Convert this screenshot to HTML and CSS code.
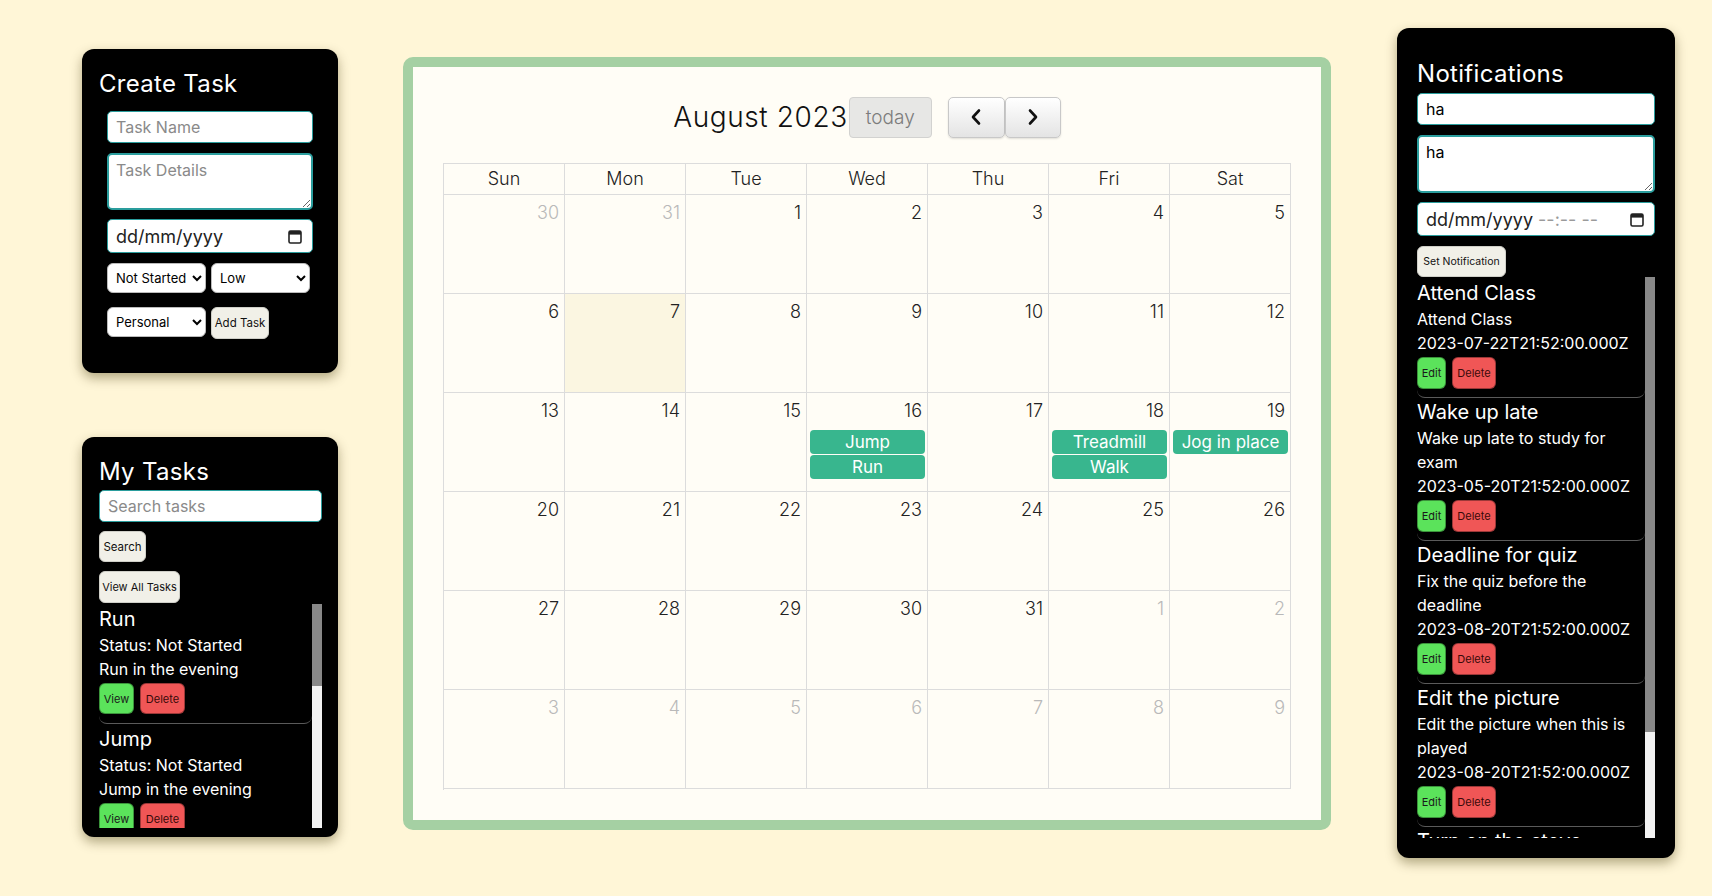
FILE: index.html
```html
<!DOCTYPE html>
<html lang="en">
<head>
<meta charset="utf-8">
<title>Task Calendar</title>
<link rel="stylesheet" href="styles.css">
</head>
<body>
<div class="app">
  <div class="left-col">
    <section class="panel create">
      <h2>Create Task</h2>
      <form class="create-form">
        <input class="field" type="text" placeholder="Task Name">
        <textarea class="field area" placeholder="Task Details"></textarea>
        <div class="field date"><span>dd/mm/yyyy</span><svg class="cal-ico" width="14" height="15" viewBox="0 0 14 15"><rect x="1" y="2" width="12" height="12" rx="1.5" fill="none" stroke="#222" stroke-width="1.6"/><rect x="1" y="2" width="12" height="3.6" fill="#222"/></svg></div>
        <div class="row">
          <select class="sel"><option>Not Started</option></select>
          <select class="sel"><option>Low</option></select>
        </div>
        <div class="row row2">
          <select class="sel"><option>Personal</option></select>
          <button class="btn add" type="button">Add Task</button>
        </div>
      </form>
    </section>

    <section class="panel tasks">
      <h2>My Tasks</h2>
      <input class="field search" type="text" placeholder="Search tasks">
      <button class="btn b-search" type="button">Search</button>
      <button class="btn b-all" type="button">View All Tasks</button>
      <div class="list-wrap">
        <div class="list">
          <div class="item">
            <h3>Run</h3>
            <p>Status: Not Started</p>
            <p>Run in the evening</p>
            <div class="actions"><button class="act green w-view">View</button><button class="act red w-del">Delete</button></div>
          </div>
          <div class="item">
            <h3>Jump</h3>
            <p>Status: Not Started</p>
            <p>Jump in the evening</p>
            <div class="actions"><button class="act green w-view">View</button><button class="act red w-del">Delete</button></div>
          </div>
          <div class="item">
            <h3>Treadmill</h3>
            <p>Status: Not Started</p>
            <p>Treadmill in the evening</p>
            <div class="actions"><button class="act green w-view">View</button><button class="act red w-del">Delete</button></div>
          </div>
        </div>
        <div class="sbar"><div class="thumb thumb-tasks"></div></div>
      </div>
    </section>
  </div>

  <main class="calendar">
    <div class="toolbar">
      <h1 class="title">August 2023</h1>
      <button class="today" type="button">today</button>
      <div class="navgrp">
        <button class="nav" type="button" aria-label="prev"><svg width="12" height="18" viewBox="0 0 12 18"><path d="M9 2.5 L3 9 L9 15.5" fill="none" stroke="#111" stroke-width="2.6" stroke-linecap="round" stroke-linejoin="round"/></svg></button>
        <button class="nav" type="button" aria-label="next"><svg width="12" height="18" viewBox="0 0 12 18"><path d="M3 2.5 L9 9 L3 15.5" fill="none" stroke="#111" stroke-width="2.6" stroke-linecap="round" stroke-linejoin="round"/></svg></button>
      </div>
    </div>
    <div class="grid">
      <div class="hd">Sun</div><div class="hd">Mon</div><div class="hd">Tue</div><div class="hd">Wed</div><div class="hd">Thu</div><div class="hd">Fri</div><div class="hd">Sat</div>

      <div class="day other"><div class="num">30</div></div>
      <div class="day other"><div class="num">31</div></div>
      <div class="day"><div class="num">1</div></div>
      <div class="day"><div class="num">2</div></div>
      <div class="day"><div class="num">3</div></div>
      <div class="day"><div class="num">4</div></div>
      <div class="day"><div class="num">5</div></div>

      <div class="day"><div class="num">6</div></div>
      <div class="day today-cell"><div class="num">7</div></div>
      <div class="day"><div class="num">8</div></div>
      <div class="day"><div class="num">9</div></div>
      <div class="day"><div class="num">10</div></div>
      <div class="day"><div class="num">11</div></div>
      <div class="day"><div class="num">12</div></div>

      <div class="day"><div class="num">13</div></div>
      <div class="day"><div class="num">14</div></div>
      <div class="day"><div class="num">15</div></div>
      <div class="day"><div class="num">16</div><div class="events"><div class="ev">Jump</div><div class="ev">Run</div></div></div>
      <div class="day"><div class="num">17</div></div>
      <div class="day"><div class="num">18</div><div class="events"><div class="ev">Treadmill</div><div class="ev">Walk</div></div></div>
      <div class="day"><div class="num">19</div><div class="events"><div class="ev">Jog in place</div></div></div>

      <div class="day"><div class="num">20</div></div>
      <div class="day"><div class="num">21</div></div>
      <div class="day"><div class="num">22</div></div>
      <div class="day"><div class="num">23</div></div>
      <div class="day"><div class="num">24</div></div>
      <div class="day"><div class="num">25</div></div>
      <div class="day"><div class="num">26</div></div>

      <div class="day"><div class="num">27</div></div>
      <div class="day"><div class="num">28</div></div>
      <div class="day"><div class="num">29</div></div>
      <div class="day"><div class="num">30</div></div>
      <div class="day"><div class="num">31</div></div>
      <div class="day other"><div class="num">1</div></div>
      <div class="day other"><div class="num">2</div></div>

      <div class="day other"><div class="num">3</div></div>
      <div class="day other"><div class="num">4</div></div>
      <div class="day other"><div class="num">5</div></div>
      <div class="day other"><div class="num">6</div></div>
      <div class="day other"><div class="num">7</div></div>
      <div class="day other"><div class="num">8</div></div>
      <div class="day other"><div class="num">9</div></div>
    </div>
  </main>

  <aside class="panel notif">
    <h2>Notifications</h2>
    <input class="field wide first" type="text" value="ha">
    <textarea class="field area wide">ha</textarea>
    <div class="field date wide"><span>dd/mm/yyyy <span class="dim">--:-- --</span></span><svg class="cal-ico" width="14" height="15" viewBox="0 0 14 15"><rect x="1" y="2" width="12" height="12" rx="1.5" fill="none" stroke="#222" stroke-width="1.6"/><rect x="1" y="2" width="12" height="3.6" fill="#222"/></svg></div>
    <button class="btn b-set" type="button">Set Notification</button>
    <div class="list-wrap">
      <div class="list nlist">
        <div class="item">
          <h3>Attend Class</h3>
          <p>Attend Class</p>
          <p>2023-07-22T21:52:00.000Z</p>
          <div class="actions"><button class="act green w-edit">Edit</button><button class="act red w-del2">Delete</button></div>
        </div>
        <div class="item">
          <h3>Wake up late</h3>
          <p>Wake up late to study for exam</p>
          <p>2023-05-20T21:52:00.000Z</p>
          <div class="actions"><button class="act green w-edit">Edit</button><button class="act red w-del2">Delete</button></div>
        </div>
        <div class="item">
          <h3>Deadline for quiz</h3>
          <p>Fix the quiz before the deadline</p>
          <p>2023-08-20T21:52:00.000Z</p>
          <div class="actions"><button class="act green w-edit">Edit</button><button class="act red w-del2">Delete</button></div>
        </div>
        <div class="item">
          <h3>Edit the picture</h3>
          <p>Edit the picture when this is played</p>
          <p>2023-08-20T21:52:00.000Z</p>
          <div class="actions"><button class="act green w-edit">Edit</button><button class="act red w-del2">Delete</button></div>
        </div>
        <div class="item">
          <h3>Turn on the stove</h3>
          <p>Turn on the stove to cook</p>
          <p>2023-08-21T21:52:00.000Z</p>
          <div class="actions"><button class="act green w-edit">Edit</button><button class="act red w-del2">Delete</button></div>
        </div>
      </div>
      <div class="sbar"><div class="thumb thumb-notif"></div></div>
    </div>
  </aside>
</div>
</body>
</html>
```

FILE: styles.css
```css
* { box-sizing: border-box; }

body {
  margin: 0;
  background: #fff6d7;
  font-family: Inter, "Open Sans", "DejaVu Sans", sans-serif;
  color: #111;
}

.app {
  display: flex;
  align-items: center;
  height: 886px;
  padding-left: 82px;
}

.left-col {
  width: 256px;
  display: flex;
  flex-direction: column;
  gap: 64px;
}

.panel {
  background: #000;
  color: #fff;
  border-radius: 12px;
  box-shadow: 0 5px 12px rgba(60, 50, 0, 0.4);
}

.panel h2 {
  margin: 0;
  padding-top: 4px;
  font-size: 24px;
  font-weight: 400;
  line-height: 30px;
  letter-spacing: 0.3px;
}

/* Create task */
.create {
  height: 324px;
  padding: 16px 17px 0;
}

.create-form {
  display: flex;
  flex-direction: column;
  padding-left: 8px;
  margin-top: 12px;
}

.field {
  display: block;
  width: 206px;
  height: 32px;
  border: 1px solid #2a9d9d;
  border-radius: 5px;
  background: #fff;
  font-family: Inter, "Open Sans", sans-serif;
  font-size: 16px;
  color: #000;
  padding: 0 8px;
  margin: 0;
  outline: none;
}

.field::placeholder { color: #8a8a8a; }

.area {
  height: 57px;
  border-width: 2px;
  margin-top: 10px;
  padding: 5px 7px;
  resize: vertical;
}

.date {
  height: 34px;
  margin-top: 9px;
  display: flex;
  align-items: center;
  justify-content: space-between;
  font-size: 18px;
  color: #222;
  padding: 0 10px 0 8px;
}

.dim { color: #9a9a9a; }

.row {
  display: flex;
  gap: 5px;
  margin-top: 10px;
}

.row2 { margin-top: 14px; }

.sel {
  width: 99px;
  height: 30px;
  border: 1px solid #bbb;
  border-radius: 6px;
  background: #fff;
  font-family: Inter, sans-serif;
  font-size: 13px;
  color: #000;
  padding: 0 2px 0 4px;
}

.btn {
  background: #f1f0e8;
  border: 1px solid #cfcfc8;
  border-radius: 6px;
  font-family: Inter, sans-serif;
  font-size: 11.5px;
  color: #111;
  height: 32px;
  padding: 0;
  white-space: nowrap;
}

.add { width: 58px; }

/* My tasks */
.tasks {
  height: 400px;
  padding: 16px 16px 9px 17px;
  display: flex;
  flex-direction: column;
}

.search {
  width: 223px;
  margin-top: 3px;
}

.b-search {
  align-self: flex-start;
  width: 47px;
  height: 31px;
  margin-top: 9px;
}

.b-all {
  align-self: flex-start;
  width: 81px;
  height: 32px;
  margin-top: 9px;
  font-size: 11px;
}

.list-wrap {
  flex: 1;
  min-height: 0;
  display: flex;
  margin-top: 1px;
}

.list {
  flex: 1;
  min-width: 0;
  overflow: hidden;
}

.sbar {
  width: 10px;
  flex: none;
  background: #f2f2f2;
}

.thumb { background: #888; }
.thumb-tasks { height: 82px; }
.thumb-notif { height: 455px; }

.item {
  padding: 1px 0 9px;
  border-bottom: 1px solid #5a5a5a;
  border-radius: 0 0 8px 8px;
}

.nlist { padding-top: 2px; }

.nlist .item {
  padding: 0 0 8px;
}

.item h3 {
  margin: 0;
  font-size: 20px;
  font-weight: 400;
  line-height: 28px;
}

.item p {
  margin: 0;
  font-size: 16px;
  line-height: 24px;
}

.actions {
  display: flex;
  gap: 6px;
  margin-top: 2px;
}

.act {
  height: 31px;
  border: 1px solid rgba(0, 0, 0, 0.35);
  border-radius: 6px;
  font-family: Inter, sans-serif;
  font-size: 11px;
  color: #1a1a1a;
  padding: 0;
}

.green { background: #5be35b; }
.red { background: #f05656; color: #3a0a0a; }

.w-view { width: 35px; }
.w-del { width: 45px; }
.w-edit { width: 29px; height: 32px; }
.w-del2 { width: 44px; height: 32px; }

/* Calendar */
.calendar {
  margin-left: 65px;
  width: 928px;
  height: 773px;
  border: 10px solid #a5d0a3;
  border-radius: 10px;
  background: #fffdf6;
  padding: 30px;
  display: flex;
  flex-direction: column;
}

.toolbar {
  display: flex;
  justify-content: center;
  align-items: center;
  height: 41px;
  margin-bottom: 25px;
}

.title {
  margin: 0;
  font-size: 28px;
  font-weight: 300;
  letter-spacing: 0.6px;
  color: #111;
  line-height: 41px;
}

.today {
  width: 83px;
  height: 41px;
  margin-left: 1px;
  background: #e7e7e5;
  border: 1px solid #d2d2d0;
  border-radius: 4px;
  color: #7c7c7c;
  font-family: Inter, sans-serif;
  font-size: 19px;
  font-weight: 300;
  padding: 0;
}

.navgrp {
  display: flex;
  margin-left: 16px;
}

.nav {
  width: 57px;
  height: 41px;
  background: linear-gradient(#ffffff, #e4e4e4);
  border: 1px solid #c8c8c8;
  border-radius: 5px;
  box-shadow: 0 1px 2px rgba(0, 0, 0, 0.12);
  display: flex;
  align-items: center;
  justify-content: center;
  padding: 0;
}

.nav + .nav { width: 56px; }

.grid {
  flex: 1;
  display: grid;
  grid-template-columns: repeat(7, 1fr);
  grid-template-rows: 31px repeat(6, 1fr);
  border-top: 1px solid #dcdcdc;
  border-left: 1px solid #dcdcdc;
}

.grid > div {
  border-right: 1px solid #dcdcdc;
  border-bottom: 1px solid #dcdcdc;
  min-width: 0;
}

.hd {
  text-align: center;
  font-size: 18px;
  font-weight: 300;
  line-height: 29px;
  color: #222;
}

.num {
  text-align: right;
  padding: 4px 5px 0;
  font-size: 18px;
  font-weight: 300;
  line-height: 28px;
  color: #222;
}

.other .num { color: #b9b9b9; }

.today-cell { background: #fbf6e1; }

.events {
  margin-top: 5px;
  display: flex;
  flex-direction: column;
  gap: 1px;
  padding: 0 2px 0 3px;
}

.ev {
  height: 24px;
  line-height: 24px;
  background: #38b68e;
  border-radius: 4px;
  color: #fff;
  font-size: 17px;
  text-align: center;
  white-space: nowrap;
  overflow: hidden;
}

/* Notifications */
.notif {
  margin-left: 66px;
  width: 278px;
  height: 830px;
  padding: 27px 20px 20px;
  display: flex;
  flex-direction: column;
}

.wide { width: 238px; }

.first { margin-top: 4px; }

.notif .area { height: 58px; }

.b-set {
  align-self: flex-start;
  width: 89px;
  height: 31px;
  margin-top: 10px;
  font-size: 10.5px;
}

.notif .list-wrap { margin-top: 0; }
```
